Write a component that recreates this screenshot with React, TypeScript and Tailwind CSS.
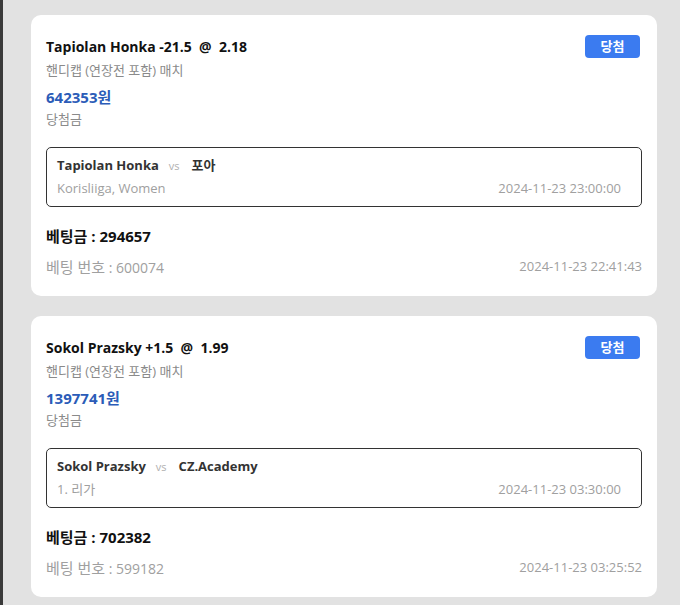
import React from 'react';

type Bet = {
  pick: string;
  market: string;
  payout: string;
  home: string;
  away: string;
  league: string;
  kickoff: string;
  stake: string;
  betNo: string;
  placedAt: string;
};

const bets: Bet[] = [
  {
    pick: 'Tapiolan Honka -21.5  @  2.18',
    market: '핸디캡 (연장전 포함) 매치',
    payout: '642353원',
    home: 'Tapiolan Honka',
    away: '포아',
    league: 'Korisliiga, Women',
    kickoff: '2024-11-23 23:00:00',
    stake: '294657',
    betNo: '600074',
    placedAt: '2024-11-23 22:41:43',
  },
  {
    pick: 'Sokol Prazsky +1.5  @  1.99',
    market: '핸디캡 (연장전 포함) 매치',
    payout: '1397741원',
    home: 'Sokol Prazsky',
    away: 'CZ.Academy',
    league: '1. 리가',
    kickoff: '2024-11-23 03:30:00',
    stake: '702382',
    betNo: '599182',
    placedAt: '2024-11-23 03:25:52',
  },
];

const BetCard: React.FC<{ bet: Bet }> = ({ bet }) => (
  <div className="bg-white rounded-[10px] px-[15px] pt-[20px] pb-[19px]">
    <div className="flex items-center justify-between h-[23px]">
      <span className="text-[14px] font-bold text-[#111] whitespace-pre">{bet.pick}</span>
      <span className="h-[23px] w-[55px] mr-[2px] rounded-[4px] bg-[#3b7bf0] text-white text-[13px] font-bold flex items-center justify-center">
        당첨
      </span>
    </div>
    <div className="text-[13px] leading-[16px] text-[#8a8a8a] mt-[4px]">{bet.market}</div>
    <div className="text-[15px] leading-[22px] font-bold text-[#2b5cb8] mt-[8px]">{bet.payout}</div>
    <div className="text-[13px] leading-[16px] text-[#8a8a8a] mt-[3px]">당첨금</div>

    {/* match box */}
    <div className="mt-[20px] border-[1.5px] border-[#333] rounded-[5px] px-[10px] py-[7px] flex flex-col gap-[4px]">
      <div className="flex items-baseline h-[20px] leading-[20px]">
        <span className="text-[13px] font-bold text-[#333]">{bet.home}</span>
        <span className="text-[11px] text-[#b0b0b0] ml-[10px] mr-[12px]">vs</span>
        <span className="text-[13px] font-bold text-[#333]">{bet.away}</span>
      </div>
      <div className="flex items-center justify-between h-[20px] text-[13px] text-[#a0a0a0] pr-[10px]">
        <span>{bet.league}</span>
        <span>{bet.kickoff}</span>
      </div>
    </div>

    <div className="mt-[18px] text-[15px] leading-[22px] font-bold text-[#111]">베팅금 : {bet.stake}</div>
    <div className="mt-[10px] flex items-center justify-between h-[20px] text-[14px] text-[#a0a0a0]">
      <span>
        <span className="text-[15px]">베팅 번호</span> : {bet.betNo}
      </span>
      <span className="text-[13px]">{bet.placedAt}</span>
    </div>
  </div>
);

const App: React.FC = () => (
  <div
    className="flex min-h-[605px] bg-[#e2e2e2]"
    style={{ fontFamily: '"Open Sans", "Noto Sans CJK KR", sans-serif' }}
  >
    <div className="w-[3px] bg-[#3a3a3a] shrink-0" />
    <div className="flex-1 pl-[28px] pr-[23px] pt-[15px] flex flex-col gap-[20px]">
      {bets.map((b) => (
        <BetCard key={b.betNo} bet={b} />
      ))}
    </div>
  </div>
);

export default App;
